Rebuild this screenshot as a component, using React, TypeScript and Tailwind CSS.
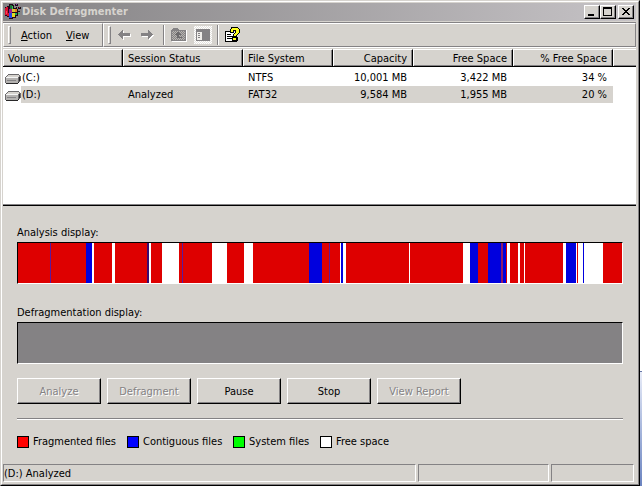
import React from "react";

type Kind = "r" | "b" | "w" | "p" | "n" | "m";

const segmentColor: Record<Kind, string> = {
  r: "bg-[#de0000]",
  b: "bg-[#0000de]",
  w: "bg-white",
  p: "bg-[#5a1a9c]",
  n: "bg-[#3a0a70]",
  m: "bg-[#8c1a6c]",
};

const segments: [Kind, number][] = [
  ["r", 32], ["p", 1], ["r", 35], ["b", 6], ["w", 2], ["r", 18], ["w", 3], ["r", 32],
  ["n", 2], ["w", 2], ["r", 11], ["w", 17], ["r", 3], ["p", 1], ["r", 29], ["w", 15],
  ["r", 17], ["w", 9], ["r", 56], ["b", 13], ["r", 7], ["p", 1], ["r", 10], ["w", 1],
  ["b", 2], ["w", 3], ["r", 63], ["w", 1], ["r", 53], ["w", 7], ["b", 8], ["r", 10],
  ["b", 13], ["m", 2], ["b", 3], ["r", 1], ["w", 3], ["r", 8], ["w", 2], ["r", 4],
  ["w", 1], ["r", 38], ["w", 3], ["b", 10], ["w", 1], ["r", 1], ["w", 5], ["b", 1],
  ["w", 19], ["r", 19],
];

const volumes = [
  { name: "(C:)", status: "", fs: "NTFS", capacity: "10,001 MB", free: "3,422 MB", percent: "34 %", selected: false },
  { name: "(D:)", status: "Analyzed", fs: "FAT32", capacity: "9,584 MB", free: "1,955 MB", percent: "20 %", selected: true },
];

const actions = [
  { label: "Analyze", disabled: true },
  { label: "Defragment", disabled: true },
  { label: "Pause", disabled: false },
  { label: "Stop", disabled: false },
  { label: "View Report", disabled: true },
];

const legend = [
  { label: "Fragmented files", color: "bg-[#ff0000]" },
  { label: "Contiguous files", color: "bg-[#0000ff]" },
  { label: "System files", color: "bg-[#00ff00]" },
  { label: "Free space", color: "bg-white" },
];

function AppIcon() {
  return (
    <svg width="18" height="18" viewBox="0 0 18 18" shapeRendering="crispEdges" aria-hidden="true">
      <path d="M1 4h2V3h2V1h4v1h1v3h3v1h1v7h-2v2H9v1H5v-2H3v-1H1z" fill="#200818" />
      <path d="M1 5h1V4h2v6h1v3H3v-1H1z" fill="#d8102e" />
      <path d="M2 8h1v3H2z" fill="#ff4058" />
      <path d="M6 2h2v4H6z" fill="#207038" />
      <path d="M8 3h1v3H8z" fill="#30c858" />
      <path d="M5 6h3v4H5z" fill="#a01890" />
      <path d="M8 6h3v3H8z" fill="#d8c830" />
      <path d="M11 6h2v3h-2z" fill="#e08020" />
      <path d="M5 10h3v5H5z" fill="#2848e0" />
      <path d="M8 10h3v4H8z" fill="#e8d820" />
      <path d="M11 10h2v2h-2z" fill="#20a850" />
      <path d="M11 1h3v2h-3zM14 4h3v2h-3zM14 8h2v1h-2zM12 4h1v1h-1z" fill="#181018" />
      <path d="M12 1h1v1h-1z" fill="#a030c0" />
      <path d="M15 4h1v1h-1z" fill="#d02040" />
      <path d="M14 10h2v1h-2z" fill="#30c050" />
    </svg>
  );
}

function ArrowIcon({ right = false }: { right?: boolean }) {
  const d = right
    ? "M7 0h1v1h1v1h1v1h1v1h1v1h-1v1h-1v1H9v1H8v1H7V6H0V3h7z"
    : "M4 0h1v3h7v3H5v3H4V8H3V7H2V6H1V5H0V4h1V3h1V2h1V1h1z";
  return (
    <svg width="14" height="10" viewBox="0 0 14 10" shapeRendering="crispEdges" aria-hidden="true">
      <path d={d} transform="translate(1 1)" fill="#fff" />
      <path d={d} fill="#848284" />
    </svg>
  );
}

function FolderIcon() {
  return (
    <svg width="17" height="14" viewBox="0 0 17 14" shapeRendering="crispEdges" aria-hidden="true">
      <defs>
        <pattern id="dots" width="2" height="2" patternUnits="userSpaceOnUse">
          <path d="M0 0h2v2H0z" fill="#b8b5b0" />
          <path d="M0 0h1v1H0zM1 1h1v1H1z" fill="#848284" />
        </pattern>
      </defs>
      <path d="M1 2h1V1h6v1h8v12H1z" fill="#fff" />
      <path d="M0 2h1V1h1V0h5v1h1v1h7v11H0z" fill="#848284" />
      <path d="M1 3h13v9H1z" fill="url(#dots)" />
      <path d="M6 4h2v1h1v1h1v1H8v2h3v1H6V7H4V6h1V5h1z" fill="#6c6a6c" />
    </svg>
  );
}

function TreeIcon() {
  return (
    <svg width="18" height="18" viewBox="0 0 18 18" shapeRendering="crispEdges" aria-hidden="true">
      <defs>
        <pattern id="pressed" width="2" height="2" patternUnits="userSpaceOnUse">
          <path d="M0 0h2v2H0z" fill="#fff" />
          <path d="M0 0h1v1H0zM1 1h1v1H1z" fill="#e4e2de" />
        </pattern>
      </defs>
      <path d="M0 0h18v18H0z" fill="url(#pressed)" />
      <path d="M2 3h14v12H2z" fill="#848284" />
      <path d="M3 6h5v8H3z" fill="#f0eeea" />
      <path d="M4 7h2v1H4zM4 9h2v1H4zM4 11h2v1H4z" fill="#848284" />
    </svg>
  );
}

function HelpIcon() {
  return (
    <svg width="16" height="16" viewBox="0 0 16 16" shapeRendering="crispEdges" aria-hidden="true">
      <path d="M0 4h8v1h3v10H0z" fill="#000" />
      <path d="M1 5h9v9H1z" fill="#fff" />
      <path d="M2 7h4v1H2zM2 9h6v1H2zM2 11h6v1H2z" fill="#000" />
      <path d="M6 0h7v1h1v1h1v4h-1v1h-1v1h-1v2h1v4h-1v1H8v-1H7v-4h1V7h1V6h1V4H9v2H5V2h1z" fill="#000" />
      <path d="M7 1h6v1h1v4h-1v1h-1v1h-1v1H9V7h1V6h1V3H8v2H6V2h1zM8 11h3v2H8z" fill="#ffff20" />
    </svg>
  );
}

function DriveIcon() {
  return (
    <svg width="16" height="10" viewBox="0 0 16 10" className="shrink-0" shapeRendering="crispEdges" aria-hidden="true">
      <path d="M3 0h11v1h1v1h1v5h-1v1h-1v1h-1v1H1V9H0V3h1V2h1V1h1z" fill="#6c6a6c" />
      <path d="M3 1h11v1H3zM2 2h12v1H2z" fill="#d6d3ce" />
      <path d="M1 3h12v6H1z" fill="#b4b2b0" />
      <path d="M1 3h12v1H1z" fill="#f4f4f4" />
      <path d="M2 6h9v1H2z" fill="#848284" />
      <path d="M14 3h1v4h-1zM13 8h1v1h-1zM1 9h12v1H1z" fill="#292829" />
    </svg>
  );
}

function CaptionButton({ label, children }: { label: string; children: React.ReactNode }) {
  return (
    <button
      type="button"
      aria-label={label}
      className="h-[14px] w-4 border border-t-white border-l-white border-r-[#000] border-b-[#000] bg-[#d6d3ce] shadow-[inset_-1px_-1px_0_#848284]"
    >
      <svg width="14" height="12" viewBox="0 0 14 12" shapeRendering="crispEdges" aria-hidden="true">
        {children}
      </svg>
    </button>
  );
}

function Grip() {
  return <span className="h-[18px] w-[3px] border border-t-white border-l-white border-r-[#848284] border-b-[#848284]" />;
}

function Separator() {
  return <span className="h-5 w-[2px] border-l border-l-[#848284] bg-white" />;
}

export default function App() {
  const head =
    "h-[18px] border-t border-r border-b border-t-white border-r-black border-b-black px-[5px] pt-px font-normal leading-[15px] shadow-[inset_1px_0_0_#fff,inset_-1px_-1px_0_#848284]";
  const toolbarBand = "flex items-center border border-t-white border-l-white border-r-[#848284] border-b-[#848284]";
  return (
    <div className="flex min-h-screen bg-white font-['Tahoma','DejaVu_Sans_Condensed','DejaVu_Sans',sans-serif] text-[11px] leading-4 text-black">
      <main className="flex min-w-0 grow flex-col border border-t-[#d6d3ce] border-l-[#d6d3ce] border-r-black border-b-black bg-[#d6d3ce]">
        <div className="flex grow flex-col border border-t-white border-l-white border-r-[#848284] border-b-[#848284] pt-px pr-[2px] pb-[2px] pl-px">
          <header className="flex h-[18px] items-center bg-linear-to-r from-[#848284] to-[#c6c3c6] pr-[2px] pl-px">
            <AppIcon />
            <h1 className="grow font-bold text-[#d6d3ce]">Disk Defragmenter</h1>
            <div className="flex">
              <CaptionButton label="Minimize">
                <path d="M3 8h6v2H3z" />
              </CaptionButton>
              <CaptionButton label="Maximize">
                <path d="M2 1h9v9H2zM3 3v6h7V3z" fillRule="evenodd" />
              </CaptionButton>
              <span className="w-[2px]" />
              <CaptionButton label="Close">
                <path d="M3 2h2v1h1v1h2V3h1V2h2v1h-1v1H9v1H8v1h1v1h1v1h1v1H9V8H8V7H6v1H5v1H3V8h1V7h1V6h1V5H5V4H4V3H3z" />
              </CaptionButton>
            </div>
          </header>

          <div className="mt-px flex h-[26px] border-t border-b border-t-[#848284] border-b-white">
            <nav className={`${toolbarBand} w-[100px] pl-1`} aria-label="Menu">
              <Grip />
              <button type="button" className="ml-[10px] pt-px">
                <span className="underline">A</span>ction
              </button>
              <button type="button" className="ml-[14px] pt-px">
                <span className="underline">V</span>iew
              </button>
            </nav>
            <div className={`${toolbarBand} grow pl-1`} role="toolbar">
              <Grip />
              <button type="button" disabled aria-label="Back" className="ml-[7px]">
                <ArrowIcon />
              </button>
              <button type="button" disabled aria-label="Forward" className="ml-[9px]">
                <ArrowIcon right />
              </button>
              <span className="w-2" />
              <Separator />
              <button type="button" disabled aria-label="Up one level" className="ml-[6px]">
                <FolderIcon />
              </button>
              <button type="button" aria-label="Show or hide console tree" className="ml-[6px]">
                <TreeIcon />
              </button>
              <span className="w-[5px]" />
              <Separator />
              <button type="button" aria-label="Help" className="ml-[6px]">
                <HelpIcon />
              </button>
            </div>
          </div>

          <section className="mt-px grow border-b border-b-black bg-white shadow-[inset_0_-1px_0_#848284]">
            <table className="w-full table-fixed border-separate border-spacing-0 whitespace-nowrap">
              <colgroup>
                <col className="w-[120px]" />
                <col className="w-[120px]" />
                <col className="w-[90px]" />
                <col className="w-[80px]" />
                <col className="w-[100px]" />
                <col className="w-[100px]" />
                <col />
              </colgroup>
              <thead className="bg-[#d6d3ce] text-left">
                <tr>
                  <th className={head}>Volume</th>
                  <th className={head}>Session Status</th>
                  <th className={head}>File System</th>
                  <th className={`${head} text-right`}>Capacity</th>
                  <th className={`${head} text-right`}>Free Space</th>
                  <th className={`${head} text-right`}>% Free Space</th>
                  <td className="border-t border-b border-t-white border-b-black shadow-[inset_1px_0_0_#fff,inset_0_-1px_0_#848284]" />
                </tr>
              </thead>
              <tbody className="before:block before:h-[2px]">
                {volumes.map((v) => {
                  const fill = v.selected ? "bg-[#d6d3ce]" : "bg-white";
                  return (
                    <tr key={v.name} className="h-[17px]">
                      <td className="p-0 pl-[2px]">
                        <div className="flex items-end">
                          <span className="pb-[2px]">
                            <DriveIcon />
                          </span>
                          <span className={`h-[17px] grow pt-px pl-px ${fill}`}>{v.name}</span>
                        </div>
                      </td>
                      <td className={`p-0 pt-px pl-[5px] ${fill}`}>{v.status}</td>
                      <td className={`p-0 pt-px pl-[5px] ${fill}`}>{v.fs}</td>
                      <td className={`p-0 pt-px pr-[6px] text-right ${fill}`}>{v.capacity}</td>
                      <td className={`p-0 pt-px pr-[6px] text-right ${fill}`}>{v.free}</td>
                      <td className={`p-0 pt-px pr-[6px] text-right ${fill}`}>{v.percent}</td>
                      <td />
                    </tr>
                  );
                })}
              </tbody>
            </table>
          </section>

          <section className="pt-[19px] pr-[13px] pb-[18px] pl-[14px]">
            <h2>Analysis display:</h2>
            <div className="mt-px flex h-[42px] border border-t-black border-l-black border-r-white border-b-white">
              {segments.map(([kind, size], i) => (
                <span key={i} className={segmentColor[kind]} style={{ flex: `${size} 1 0px` }} />
              ))}
            </div>
            <h2 className="mt-[21px]">Defragmentation display:</h2>
            <div className="mt-px h-[42px] border border-t-black border-l-black border-r-white border-b-white bg-[#848284]" />

            <div className="mt-[14px] flex gap-[6px]">
              {actions.map((a) => (
                <button
                  key={a.label}
                  type="button"
                  disabled={a.disabled}
                  className="h-[26px] w-[84px] border border-t-white border-l-white border-r-black border-b-black pt-[2px] shadow-[inset_-1px_-1px_0_#848284] disabled:text-[#848284] disabled:[text-shadow:1px_1px_0_#fff]"
                >
                  {a.label}
                </button>
              ))}
            </div>

            <hr className="mt-[14px] h-[2px] border-t border-b border-t-[#848284] border-b-white" />

            <ul className="mt-[14px] grid h-3 grid-cols-[110px_106px_87px_auto] items-center">
              {legend.map((l) => (
                <li key={l.label} className="flex items-center gap-1 whitespace-nowrap">
                  <span className={`size-3 border border-black ${l.color}`} />
                  {l.label}
                </li>
              ))}
            </ul>
          </section>

          <footer className="flex h-[18px] gap-[2px] pr-[2px]">
            <p className="grow border border-t-[#848284] border-l-[#848284] border-r-white border-b-white pt-px">(D:) Analyzed</p>
            <span className="w-[131px] border border-t-[#848284] border-l-[#848284] border-r-white border-b-white" />
            <span className="w-[83px] border border-t-[#848284] border-l-[#848284] border-r-white border-b-white" />
          </footer>
        </div>
      </main>
      <div className="flex w-[2px] shrink-0 flex-col justify-end" aria-hidden="true">
        <span className="h-[115px] border-t border-t-[#6878a8] bg-linear-to-b from-[#e8ecf8] to-[#6c84c0]" />
      </div>
    </div>
  );
}
